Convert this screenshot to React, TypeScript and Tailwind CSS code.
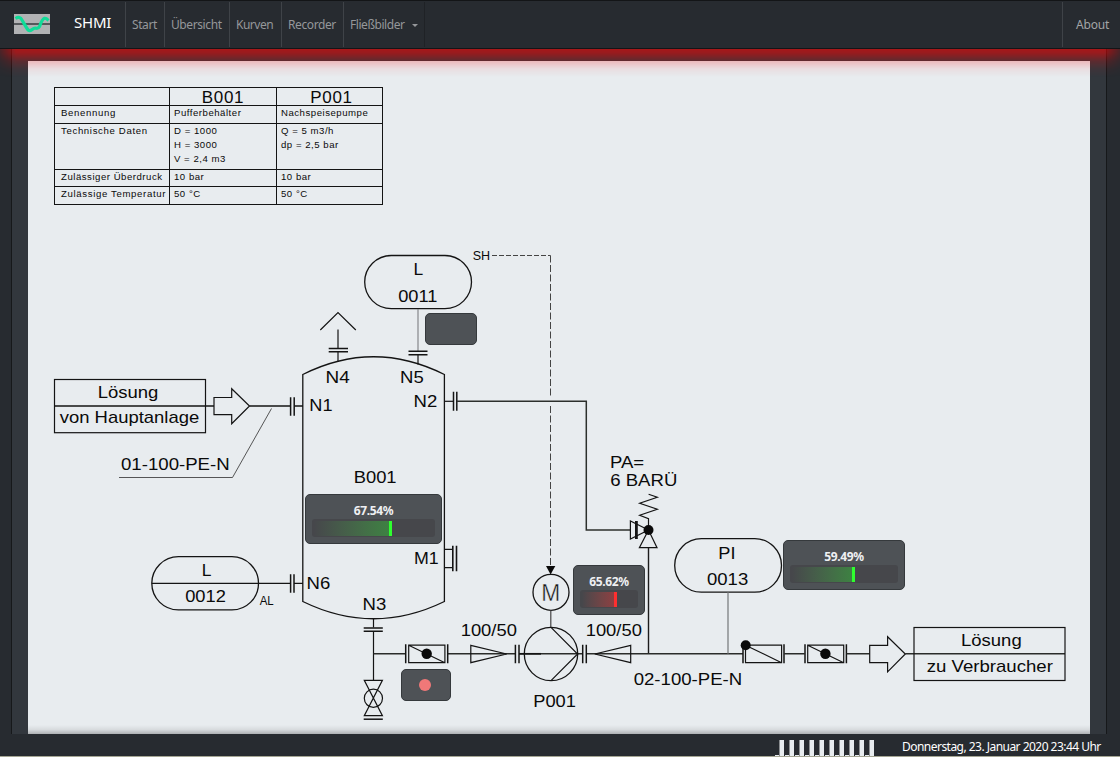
import React from "react";
import clsx from "clsx";

const SANS = "font-['Noto_Sans','Open_Sans',sans-serif]";

type NavEntry = { label: string; box: string; tracking: string; caret?: boolean };

const NAV: NavEntry[] = [
  { label: "Start", box: "w-[39px]", tracking: "tracking-[-0.4px]" },
  { label: "Übersicht", box: "w-[65px]", tracking: "tracking-[-0.4px]" },
  { label: "Kurven", box: "w-[52px]", tracking: "tracking-[-0.5px]" },
  { label: "Recorder", box: "w-[62px]", tracking: "tracking-[-0.4px]" },
  { label: "Fließbilder", box: "w-[81px]", tracking: "tracking-[-0.45px]", caret: true },
];

function Logo() {
  return (
    <svg width="36" height="20" viewBox="0 0 36 20" className="block">
      <rect width="36" height="20" fill="#b1b2b4" />
      <rect y="9" width="36" height="2" fill="#55585b" />
      <path
        d="M1.500 4.500C4.500 2.600 6.500 3.200 8 6C10.500 10 12.500 14.500 14.500 16.300C16.500 17.800 18 15 20.500 14.300C22.500 13.800 24 15.500 25.500 12.500C27 9 28 5 30.500 4.300C32.500 3.900 33.500 5.500 34.500 6.500"
        fill="none"
        stroke="#10dc98"
        strokeWidth="3.200"
      />
    </svg>
  );
}

function Header() {
  return (
    <header className="flex h-[49px] shrink-0 border-y border-[#131517] bg-[#272b30]">
      <div className="flex w-[125px] pl-[14px] pt-[13px]">
        <Logo />
        <span className="ml-6 -mt-[2px] text-[15px] leading-5 tracking-[-0.2px] text-white">SHMI</span>
      </div>
      <nav className="flex pt-px">
        {NAV.map((n) => (
          <a
            key={n.label}
            className={clsx(
              "flex h-[45px] items-center whitespace-nowrap border-l border-[#3f4348] pl-[6px] pt-[1px] text-[12px] text-[#95979a]",
              n.box,
              n.tracking,
            )}
          >
            {n.label}
            {n.caret && (
              <span className="ml-[7px] border-x-[3px] border-t-[3px] border-x-transparent border-t-[#95979a]" />
            )}
          </a>
        ))}
        <span className="h-[45px] border-l border-[#1f2226]" />
      </nav>
      <a className="ml-auto mt-px flex h-[45px] w-[58px] items-center border-l border-[#3f4348] pl-[13px] pt-[1px] text-[12px] tracking-[-0.2px] text-[#a3a5a7]">
        About
      </a>
    </header>
  );
}

type LabelProps = { x: number; y: number; w: number; size?: number; children: string };

function Label({ x, y, w, size = 17, children }: LabelProps) {
  return (
    <text x={x + 0.7} y={y} fontSize={size} textLength={w - 0.8} lengthAdjust="spacingAndGlyphs" fill="#0a0a0a" stroke="none">
      {children}
    </text>
  );
}

function Diagram() {
  return (
    <svg
      width="1062"
      height="673"
      viewBox="28 61 1062 673"
      className="block font-['Liberation_Sans',Arial,sans-serif]"
      fill="none"
      stroke="#141414"
      strokeWidth="1.200"
    >
      {/* tank */}
      <path d="M302.800 601.500V374.500Q373.500 339 444.400 374.500V601.500Q373.500 636 302.800 601.500Z" strokeWidth="1.300" />

      {/* N4 vent */}
      <path d="M320.300 330L338 312.500L355.800 330M338 329.500V348M338 352V362" />
      <path d="M328.700 348.500H348M328.700 351.700H348" strokeWidth="1.500" />

      {/* N5 level */}
      <rect x="364.700" y="255.500" width="106.800" height="53.200" rx="26.600" strokeWidth="1.300" />
      <path d="M418 309V351" stroke="#85888a" />
      <path d="M408.500 351.300H427.500M408.500 354.700H427.500" strokeWidth="1.500" />
      <path d="M418 355V364.500" />
      <path d="M492 255.500H550.500" stroke="#444" strokeWidth="1" strokeDasharray="5 2" />
      <path d="M550.500 255.500V397M550.500 406V567" stroke="#444" strokeWidth="1" strokeDasharray="7 2.500" />
      <path d="M546 566H555.300L550.600 574.500Z" fill="#0a0a0a" stroke="none" />

      {/* inlet */}
      <rect x="54.500" y="379.500" width="151" height="53.200" />
      <path d="M54.500 406H214M249.500 406H290.500M294 406H303" strokeWidth="1.400" />
      <path d="M214 397.500H231.700V388.700L249.500 406L231.700 423.700V414.700H214Z" />
      <path d="M290.600 397.300V415.700M294.200 397.300V415.700" strokeWidth="1.500" />
      <path d="M271.500 408.500L232.500 477.500H119" stroke="#444" strokeWidth="0.900" />

      {/* N2 return line */}
      <path d="M444.400 401.300H453" />
      <path d="M453.500 391.700V410.700M456.800 391.700V410.700" strokeWidth="1.500" />
      <path d="M457 401.300H586.300V530H630" stroke="#2c2f2c" strokeWidth="1.500" />

      {/* safety valve */}
      <path d="M648.600 494.300L657.300 497.300L639.700 503.300L657.300 509.300L639.700 515.300L648.500 518.700V530" />
      <path d="M648.500 530L630.400 521V539ZM648.500 530L639.400 547.700H657Z" />
      <path d="M636.400 521V539" strokeWidth="2.800" />
      <circle cx="648.500" cy="530" r="5" fill="#0a0a0a" stroke="none" />
      <path d="M648.500 547.700V653.700" stroke="#1c1c1c" strokeWidth="1.400" />

      {/* M1 manhole */}
      <path d="M444.400 549.300H452.500M444.400 567.700H452.500" />
      <path d="M452.800 545.700V571.300M456.500 545.700V571.300" strokeWidth="1.600" />

      {/* N6 level switch */}
      <rect x="151.800" y="556.700" width="106.700" height="53.200" rx="26.600" strokeWidth="1.300" />
      <path d="M151.800 583.300H290.500M294 583.300H303" />
      <path d="M290.600 574.300V592.700M294 574.300V592.700" strokeWidth="1.500" />

      {/* N3 outlet and drain */}
      <path d="M373.500 618.700V627.500M373.500 631V680.300" />
      <path d="M363.700 627.900H382.800M363.700 631.200H382.800" strokeWidth="1.500" />
      <path d="M364.300 680.300H382.400L364.300 715.700H382.400Z" />
      <circle cx="373.400" cy="698.300" r="9.100" />
      <path d="M363.700 719.200H382.800" strokeWidth="1.500" />

      {/* suction line */}
      <path d="M373.500 653.800H405.700M448 653.800H515.500M519 653.800H582.700M586.300 653.800H743" stroke="#2a2c2a" strokeWidth="1.400" />
      <path d="M519 653.800H541" strokeWidth="1.700" />
      <path d="M405.700 644.300V663.300M447.700 644.300V663.300" strokeWidth="1.500" />
      <path d="M408.700 645.200H444.900V662.700H408.700ZM408.700 645.200L444.900 662.700" />
      <circle cx="426.700" cy="653.700" r="5.200" fill="#0a0a0a" stroke="none" />
      <path d="M470.800 645.300L506.700 654L470.800 662.700ZM630.700 645.300L594.800 654L630.700 662.700Z" />
      <path d="M515.400 644.700V663.300M519 644.700V663.300M582.700 644.700V663.300M586.300 644.700V663.300" strokeWidth="1.500" />

      {/* pump and motor */}
      <circle cx="551" cy="592.300" r="18" strokeWidth="1.300" />
      <path d="M550.800 610.300V627.300" stroke="#444" />
      <circle cx="551" cy="654" r="26.700" strokeWidth="1.300" />
      <path d="M551 627.300L577.600 654L551 680.600" />

      {/* PI 0013 */}
      <rect x="674.700" y="538.700" width="106.800" height="53.500" rx="26.700" strokeWidth="1.300" />
      <path d="M728 592.500V653.500" stroke="#85888a" strokeWidth="1.400" />

      {/* check valve, shut-off valve, outlet */}
      <path d="M743 644.300V663.300M784 644.300V663.300M805 644.300V663.300M846.400 644.300V663.300" strokeWidth="1.500" />
      <path d="M745.500 645.200H781.600V662.700H745.500ZM745.500 645.200L781.600 662.700" />
      <circle cx="745.700" cy="645.200" r="5" fill="#0a0a0a" stroke="none" />
      <path d="M807.700 645.200H843.700V662.700H807.700ZM807.700 645.200L843.700 662.700" />
      <circle cx="825.400" cy="653.700" r="5.200" fill="#0a0a0a" stroke="none" />
      <path d="M784 653.800H805M846.500 653.800H869.700M905.300 653.800H1065" stroke="#2a2c2a" strokeWidth="1.400" />
      <path d="M869.700 645.300H887.600V636.700L905.300 654L887.600 671.800V662.700H869.700Z" />
      <rect x="914" y="627.500" width="151" height="53" />

      <Label x={412.7} y={275} w={10.5}>L</Label>
      <Label x={397.5} y={301.8} w={40}>0011</Label>
      <Label x={472} y={260} w={18.2} size={12}>SH</Label>
      <Label x={324.8} y={382.8} w={25}>N4</Label>
      <Label x={399.300} y={382.800} w={24.500}>N5</Label>
      <Label x={412.800} y={406.800} w={24.500}>N2</Label>
      <Label x={308.600} y={410.900} w={24}>N1</Label>
      <Label x={97} y={398.400} w={61.500}>Lösung</Label>
      <Label x={59} y={422.800} w={140.300}>von Hauptanlage</Label>
      <Label x={120.300} y={470} w={109.500}>01-100-PE-N</Label>
      <Label x={353} y={483} w={43.700}>B001</Label>
      <Label x={413.300} y={564} w={25.500}>M1</Label>
      <Label x={305.800} y={589.300} w={24.500}>N6</Label>
      <Label x={361.800} y={610} w={24.500}>N3</Label>
      <Label x={201} y={575.800} w={10.500}>L</Label>
      <Label x={184.500} y={602.300} w={41.500}>0012</Label>
      <Label x={259} y={605} w={14.800} size={12}>AL</Label>
      <Label x={460} y={635.800} w={57}>100/50</Label>
      <Label x={585} y={635.800} w={57}>100/50</Label>
      <Label x={532.500} y={706.800} w={43.500}>P001</Label>
      <text x="541.200" y="601" fontSize="23" textLength="19" lengthAdjust="spacingAndGlyphs" fill="#141414" stroke="#e8ecef" strokeWidth="0.400">M</text>
      <Label x={609.300} y={468.200} w={35}>PA=</Label>
      <Label x={609.500} y={486.200} w={68}>6 BARÜ</Label>
      <Label x={717.600} y={559} w={18}>PI</Label>
      <Label x={706.300} y={585} w={42}>0013</Label>
      <Label x={633} y={685.300} w={109.300}>02-100-PE-N</Label>
      <Label x={960.300} y={646.200} w={61.500}>Lösung</Label>
      <Label x={926} y={671.800} w={127}>zu Verbraucher</Label>
    </svg>
  );
}

const line = "border-b border-r border-[#141414]";
const nameCell = clsx(line, "pl-[6px] tracking-[0.65px]");
const cell = clsx(line, "pl-[4px]");
const headCell = clsx(line, "text-center text-[17px] leading-[19px] tracking-[0.7px]");

function DataTable() {
  return (
    <div className="absolute left-[26px] top-[26px] grid w-[329px] grid-cols-[115px_107px_106px] grid-rows-[18px_18px_46px_17px_18px] border-l border-t border-[#141414] font-['Liberation_Sans',Arial,sans-serif] text-[9.6px] leading-[13px] tracking-[0.52px] text-[#0a0a0a] whitespace-nowrap">
      <div className={line} />
      <div className={headCell}>B001</div>
      <div className={clsx(headCell, "pl-[4px]")}>P001</div>
      <div className={nameCell}>Benennung</div>
      <div className={cell}>Pufferbehälter</div>
      <div className={cell}>Nachspeisepumpe</div>
      <div className={nameCell}>Technische Daten</div>
      <div className={clsx(cell, "leading-[14px]")}>D = 1000<br />H = 3000<br />V = 2,4 m3</div>
      <div className={clsx(cell, "leading-[14px]")}>Q = 5 m3/h<br />dp = 2,5 bar</div>
      <div className={clsx(line, "pl-[6px]")}>Zulässiger Überdruck</div>
      <div className={cell}>10 bar</div>
      <div className={cell}>10 bar</div>
      <div className={nameCell}>Zulässige Temperatur</div>
      <div className={cell}>50 °C</div>
      <div className={cell}>50 °C</div>
    </div>
  );
}

const panel = "absolute rounded-[5px] border border-[#35393c] bg-[#4e5256]";

function Gauge({ value, fill, place, red }: { value: string; fill: string; place: string; red?: boolean }) {
  return (
    <div className={clsx(panel, "h-[50px] px-[6px] pt-[7px] text-center", place)}>
      <div className="h-[17px] text-[12px] font-bold leading-[18px] tracking-[-0.35px] text-[#eef0f2]">{value}</div>
      <div className="flex h-[18px] items-center rounded-[3px] bg-[#46474b] pl-[2px]">
        <div
          className={clsx(
            "h-[15px] border-r-[3px] bg-linear-to-r",
            red ? "border-[#ff2f2f] from-[#46474b] to-[#8c3f42]" : "border-[#2fff2f] from-[#46474b] to-[#3d8142]",
            fill,
          )}
        />
      </div>
    </div>
  );
}

function Footer() {
  return (
    <footer className="flex h-[23px] shrink-0 border-b border-[#a5a694] bg-[#272b30]">
      <svg width="101" height="16" viewBox="0 0 101 16" className="ml-[775px] mt-[6px] block">
        {Array.from({ length: 10 }, (_, i) => (
          <g key={i}>
            <rect x={i * 10 + 4} width="1" height="16" fill="#8b8e91" />
            <rect x={i * 10 + 5} width="4" height="16" fill="#e8ecef" />
            <rect x={i * 10} y="15" width="4" height="1" fill="#e8ecef" />
          </g>
        ))}
      </svg>
      <span className="ml-[26px] mt-[4px] whitespace-nowrap text-[12px] leading-[17px] tracking-[-0.53px] text-white">
        Donnerstag, 23. Januar 2020 23:44 Uhr
      </span>
    </footer>
  );
}

export default function App() {
  return (
    <div className={clsx("flex h-[757px] w-[1120px] flex-col overflow-hidden bg-[#272b30]", SANS)}>
      <Header />
      <main className="relative flex h-[685px] shrink-0 justify-center">
        <div className="w-[11px] shrink-0" />
        <div className="flex flex-1 border-x border-[#16181a] bg-[#32373d] pl-[16px] pt-[12px]">
          <div className="relative h-[673px] w-[1062px] shrink-0 bg-[#e8ecef]">
            <Diagram />
            <DataTable />
            <div className={clsx(panel, "left-[397px] top-[252px] h-[32px] w-[52px]")} />
            <div className={clsx(panel, "left-[373px] top-[608px] flex h-[32px] w-[50px] items-center justify-center")}>
              <span className="mr-[2px] size-3 rounded-full bg-[#f07878]" />
            </div>
            <Gauge value="67.54%" place="left-[277px] top-[433px] w-[137px]" fill="w-[78px]" />
            <Gauge value="65.62%" place="left-[545px] top-[504px] w-[72px]" fill="w-[35px]" red />
            <Gauge value="59.49%" place="left-[755px] top-[479px] w-[122px]" fill="w-[63px]" />
            <div className="pointer-events-none absolute inset-x-0 bottom-0 h-[9px] bg-linear-to-t from-[#00000040] via-[#00000012] to-transparent" />
          </div>
        </div>
        <div className="w-[13px] shrink-0" />
        <div className="pointer-events-none absolute inset-x-0 top-0 h-[28px] bg-[linear-gradient(to_bottom,rgba(255,0,0,0.57)_0px,rgba(255,0,0,0.5)_4px,rgba(255,0,0,0.21)_12px,rgba(255,0,0,0.06)_20px,transparent_28px)] [mask-image:linear-gradient(to_right,rgba(0,0,0,0.3),black_16px,black_1104px,rgba(0,0,0,0.3))]" />
      </main>
      <Footer />
    </div>
  );
}
